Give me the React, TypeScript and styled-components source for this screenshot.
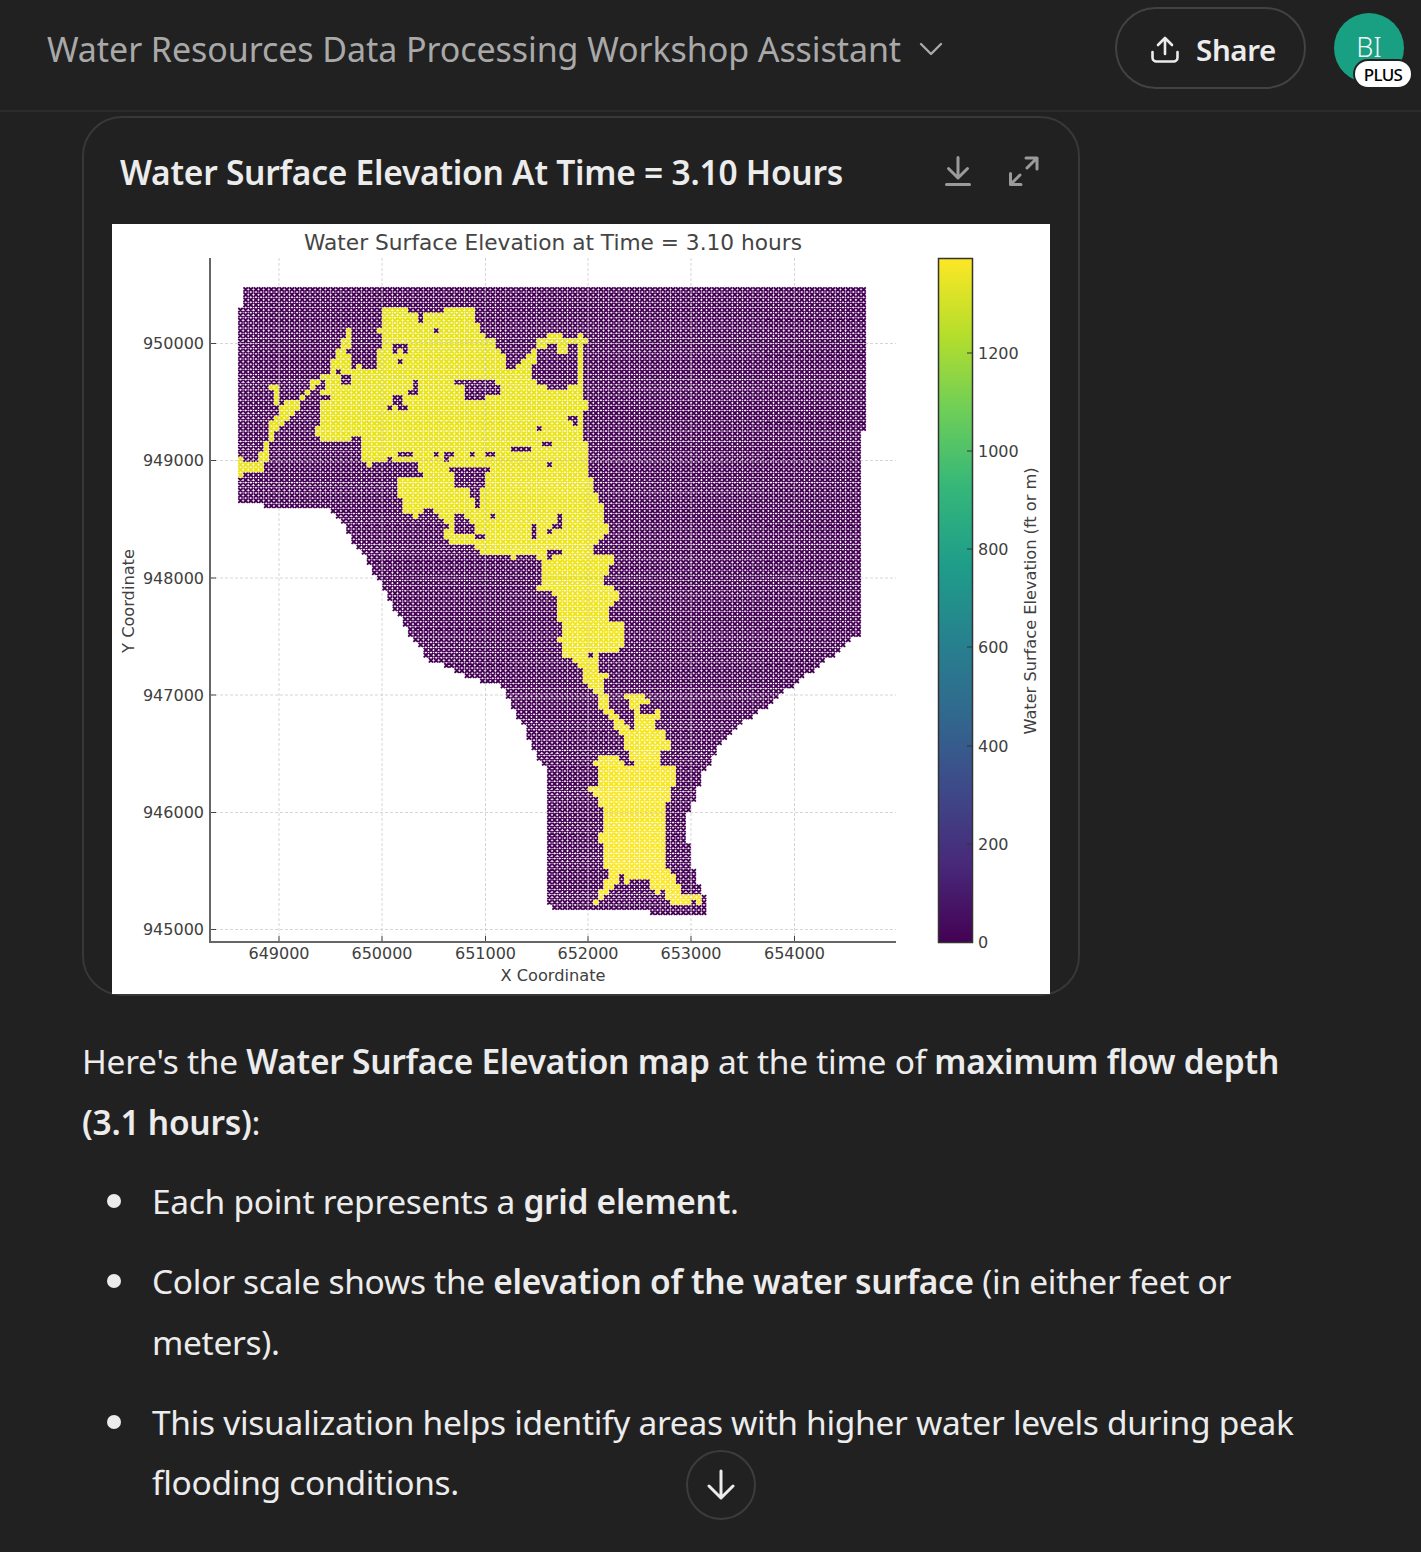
import React from "react";
import styled, { createGlobalStyle } from "styled-components";

const GlobalStyle = createGlobalStyle`
  html, body {
    margin: 0;
    background: #212121;
    height: 100%;
    overflow: hidden;
  }
  #root {
    height: 100%;
  }
`;

const Page = styled.div`
  position: relative;
  height: 1552px;
  overflow: hidden;
  background: #212121;
  color: #ececec;
  font-family: "Noto Sans", "Open Sans", sans-serif;
`;

const Header = styled.header`
  display: flex;
  align-items: center;
  justify-content: space-between;
  box-sizing: border-box;
  height: 112px;
  padding: 0 17px 14px 47px;
  border-bottom: 2px solid #2c2c2c;
`;

const ChatTitle = styled.div`
  display: flex;
  align-items: center;
  gap: 18px;
  margin-top: 2px;
  font-size: 34px;
  letter-spacing: -0.08px;
  color: #a9a9a9;
`;

const HeaderActions = styled.div`
  display: flex;
  align-items: center;
  gap: 28px;
`;

const ShareButton = styled.button`
  display: flex;
  align-items: center;
  justify-content: center;
  gap: 17px;
  box-sizing: border-box;
  width: 191px;
  height: 82px;
  padding: 3px 0 0 6px;
  border: 2px solid #424242;
  border-radius: 41px;
  background: transparent;
  color: #ececec;
  font-family: inherit;
  font-size: 29.5px;
  font-weight: 600;
  letter-spacing: -0.4px;
`;

const Avatar = styled.div`
  position: relative;
  display: flex;
  align-items: center;
  justify-content: center;
  box-sizing: border-box;
  width: 70px;
  height: 70px;
  padding-bottom: 4px;
  border-radius: 50%;
  background: #19a083;
  color: #f4f4f4;
  font-size: 27px;
  font-weight: 300;
`;

const PlanBadge = styled.span`
  position: absolute;
  left: 21px;
  top: 48px;
  display: flex;
  align-items: center;
  justify-content: center;
  width: 56px;
  height: 26px;
  border-radius: 13px;
  background: #fff;
  color: #000;
  font-size: 17px;
  font-weight: 500;
  letter-spacing: -0.7px;
  box-shadow: 0 0 0 2px #212121;
`;

const Main = styled.main`
  box-sizing: border-box;
  padding: 4px 84px 0 82px;
`;

const ChartCard = styled.section`
  box-sizing: border-box;
  width: 998px;
  height: 880px;
  padding: 0 28px;
  border: 2px solid #383838;
  border-radius: 40px;
`;

const ChartHeader = styled.div`
  display: flex;
  align-items: center;
  justify-content: space-between;
  box-sizing: border-box;
  height: 106px;
  padding: 2px 11px 0 8px;
`;

const ChartTitle = styled.h2`
  margin: 0;
  font-size: 33.5px;
  font-weight: 600;
  letter-spacing: -0.23px;
  color: #ececec;
`;

const ChartTools = styled.div`
  display: flex;
  align-items: center;
  gap: 38px;
  margin-top: -2px;
  color: #9b9b9b;
`;

const ChartSvg = styled.svg`
  display: block;
  width: 938px;
  height: 770px;
  background: #fff;
`;

const TickLabel = styled.text`
  font-family: "DejaVu Sans", sans-serif;
  font-size: 16px;
  fill: #404040;
`;

const AxisTitle = styled.text`
  font-family: "DejaVu Sans", sans-serif;
  font-size: 16.2px;
  fill: #404040;
`;

const PlotTitle = styled.text`
  font-family: "DejaVu Sans", sans-serif;
  font-size: 21.7px;
  fill: #444;
`;

const Paragraph = styled.p`
  margin: 35px 0 0;
  font-size: 33.5px;
  line-height: 60.5px;
  letter-spacing: -0.26px;
`;

const Strong = styled.strong`
  font-weight: 600;
`;

const BulletList = styled.ul`
  list-style: none;
  margin: 19px 0 0;
  padding: 0 0 0 25px;
`;

const BulletItem = styled.li`
  display: flex;
  gap: 31px;
  margin-bottom: 19.5px;
  font-size: 33.5px;
  line-height: 60.5px;
  letter-spacing: -0.3px;
`;

const BulletDot = styled.span`
  flex: none;
  width: 14px;
  height: 14px;
  margin-top: 23px;
  border-radius: 50%;
  background: #ececec;
`;

const ScrollDown = styled.button`
  position: absolute;
  left: 686px;
  top: 1450px;
  display: flex;
  align-items: center;
  justify-content: center;
  box-sizing: border-box;
  width: 70px;
  height: 70px;
  padding: 0;
  border: 2px solid #3c3c3c;
  border-radius: 50%;
  background: #212121;
  color: #ececec;
`;

type Pt = [number, number];

// the crops were taken at 3x, so traced outlines are kept in crop coordinates
const crop = (ox: number, oy: number, pts: number[][]): Pt[] =>
  pts.map(([x, y]) => [ox + x / 3, oy + y / 3]);

const boxes = (ox: number, oy: number, list: number[][]) =>
  list.map(([a, b, c, d]) => [ox + a / 3, oy + b / 3, ox + c / 3, oy + d / 3]);

const domain: Pt[] = [
  [243, 287], [867, 287], [867, 433], [862, 433], [862, 632], [853, 640], [840, 650], [800, 680],
  [753, 717], [733, 730], [720, 743], [713, 760], [703, 773], [697, 793], [692, 807], [687, 817],
  [687, 837], [692, 860], [697, 880], [702, 893], [708, 902], [708, 914], [651, 914], [651, 908],
  [553, 908], [548, 902], [548, 770], [543, 765], [533, 748], [527, 733], [523, 723], [512, 708],
  [502, 687], [472, 678], [455, 672], [430, 660], [413, 640], [403, 623], [390, 600], [382, 585],
  [370, 567], [363, 553], [353, 543], [343, 525], [337, 518], [327, 510], [265, 509], [265, 503],
  [238, 503], [238, 305], [243, 305],
];

const flooded: Pt[] = [
  ...crop(210, 270, [
    [520, 105], [597, 105], [597, 135], [700, 135], [703, 105], [767, 105], [767, 120], [797, 120],
    [797, 150], [812, 165], [812, 190], [828, 205], [860, 210], [860, 225], [875, 240], [890, 265],
    [890, 295], [920, 295], [935, 280], [950, 265], [985, 225], [985, 210], [1015, 205], [1015, 190],
    [1060, 190], [1060, 210], [1110, 210], [1110, 190], [1122, 190], [1122, 210], [1137, 210],
    [1137, 225], [1122, 225], [1122, 385], [1137, 385], [1137, 420], [1122, 430], [1122, 520],
    [1137, 525], [1137, 630],
  ]),
  ...crop(380, 480, [
    [640, 0], [640, 30], [660, 50], [660, 70], [672, 80], [672, 125], [705, 125], [705, 135],
    [690, 140], [690, 155], [670, 165], [660, 180], [640, 195], [640, 225], [705, 230], [705, 245],
    [690, 250], [690, 285], [660, 285], [670, 300], [670, 315], [705, 320], [705, 335], [720, 335],
    [720, 365], [690, 375], [690, 420], [735, 425], [735, 490], [720, 505], [720, 520], [660, 525],
    [660, 580], [690, 580], [690, 595], [675, 600],
  ]),
  ...crop(520, 680, [
    [250, 0], [250, 35], [270, 35], [270, 85], [300, 105], [315, 125], [330, 145], [345, 155],
    [345, 100], [330, 85], [330, 50], [315, 50], [315, 35], [378, 35], [378, 50], [392, 50],
    [392, 65], [362, 70], [362, 105], [407, 105], [407, 85], [422, 85], [422, 105], [407, 120],
    [407, 155], [438, 155], [438, 175], [453, 180], [453, 205], [425, 210], [425, 260], [468, 260],
    [468, 310], [455, 320], [455, 370], [438, 375], [438, 560], [455, 575], [470, 590], [470, 610],
    [485, 615], [485, 645], [545, 650], [545, 682], [530, 682], [530, 665], [515, 665], [515, 682],
    [455, 682], [455, 660], [440, 650], [438, 630], [420, 630], [420, 645], [407, 645], [395, 625],
    [378, 595], [362, 595], [345, 590], [330, 610], [315, 610], [315, 580], [300, 580], [300, 595],
    [285, 610], [270, 630], [252, 645], [252, 665], [238, 668], [238, 682], [222, 682], [222, 665],
    [238, 660], [238, 630], [255, 615], [255, 595], [270, 580], [255, 570], [252, 490], [238, 490],
    [238, 455], [252, 455], [252, 380], [238, 380], [238, 350], [222, 345], [222, 330], [208, 330],
    [208, 315], [238, 315], [238, 262], [222, 262], [222, 245], [238, 245], [238, 227], [300, 227],
    [300, 240], [330, 240], [315, 205], [315, 170], [285, 150], [285, 125], [270, 120], [255, 100],
    [240, 85], [240, 50], [220, 35], [205, 15], [190, 0],
  ]),
  ...crop(380, 480, [
    [610, 570], [595, 565], [580, 530], [550, 525], [550, 490], [535, 490], [535, 475], [550, 470],
    [550, 435], [535, 425], [535, 365], [520, 340], [472, 330], [472, 315], [487, 315], [487, 250],
    [475, 245], [470, 230], [410, 230], [410, 245], [395, 245], [395, 230], [320, 225], [287, 205],
    [287, 195], [195, 185], [195, 150], [210, 135], [195, 120], [165, 105], [160, 90], [135, 90],
    [130, 105], [115, 105], [115, 120], [100, 120], [100, 105], [70, 90], [70, 60], [55, 45], [55, 0],
  ]),
  ...crop(210, 270, [
    [580, 615], [595, 615], [595, 630], [640, 630], [640, 600], [625, 600], [625, 575], [555, 575],
    [535, 565], [505, 575], [495, 575], [480, 595], [460, 570], [457, 510], [445, 490], [440, 505],
    [410, 510], [410, 520], [395, 520], [380, 510], [318, 505], [318, 470], [333, 470], [333, 385],
    [360, 383], [395, 380], [395, 368], [335, 368], [345, 350], [330, 345], [300, 368], [285, 385],
    [258, 420], [225, 460], [195, 490], [180, 520], [180, 575], [165, 575], [165, 610], [100, 612],
    [85, 625], [85, 560], [100, 560], [100, 575], [150, 575], [150, 545], [165, 540], [165, 510],
    [180, 505], [180, 460], [210, 430], [210, 400], [195, 400], [195, 365], [180, 365], [180, 350],
    [210, 350], [210, 400], [225, 400], [240, 385], [270, 385], [285, 365], [305, 335], [330, 320],
    [365, 300], [365, 265], [380, 250], [395, 210], [412, 205], [412, 175], [425, 175], [425, 205],
    [412, 240], [430, 280], [430, 295], [445, 295], [445, 280], [455, 280], [455, 295], [503, 295],
    [503, 250], [520, 230], [520, 190], [505, 190], [505, 175], [520, 175],
  ]),
];

const archHole = crop(210, 270, [
  [985, 240], [1015, 240], [1015, 225], [1045, 225], [1045, 240], [1060, 255], [1075, 255],
  [1075, 225], [1107, 225], [1107, 350], [1075, 350], [1075, 365], [1060, 350], [1045, 365],
  [1000, 350], [985, 335], [970, 320], [965, 290], [985, 250],
]);

const dryPatches = [
  ...boxes(210, 270, [
    [622, 135, 640, 155], [672, 174, 690, 190], [550, 228, 565, 258], [565, 228, 596, 240],
    [582, 240, 596, 258], [564, 260, 580, 276], [380, 297, 396, 312], [395, 316, 426, 346],
    [332, 333, 348, 348], [612, 333, 626, 366], [598, 366, 626, 382], [550, 368, 582, 400],
    [565, 400, 596, 416], [534, 402, 550, 418], [737, 333, 858, 348], [767, 348, 874, 382],
    [767, 382, 828, 398], [1076, 438, 1107, 454], [1090, 456, 1106, 470], [983, 474, 998, 488],
    [998, 508, 1030, 524], [905, 526, 966, 540], [565, 544, 612, 558], [672, 544, 688, 558],
    [704, 544, 736, 558], [704, 562, 720, 576], [781, 544, 796, 558], [828, 544, 858, 558],
    [1013, 578, 1028, 594], [722, 596, 843, 612], [737, 612, 827, 646], [782, 646, 812, 680],
    [797, 680, 812, 716], [843, 738, 858, 752], [738, 738, 765, 755], [738, 755, 780, 770],
    [738, 770, 795, 785], [797, 790, 827, 805], [968, 755, 983, 805], [1013, 771, 1028, 786],
    [1030, 755, 1058, 770], [1044, 738, 1058, 755], [1013, 844, 1058, 858], [1013, 858, 1028, 875],
  ]),
  ...boxes(380, 480, [
    [332, 105, 348, 122], [225, 105, 255, 120], [225, 120, 270, 135], [225, 135, 285, 157],
    [287, 157, 317, 175], [457, 125, 472, 175], [503, 140, 518, 156], [535, 105, 550, 135],
    [520, 125, 550, 135], [505, 212, 550, 227], [505, 227, 520, 245], [626, 510, 641, 526],
  ]),
  ...boxes(520, 680, [[345, 158, 360, 172], [315, 245, 345, 260]]),
];

const inside = (poly: Pt[], x: number, y: number) => {
  let hit = false;
  for (let i = 0, j = poly.length - 1; i < poly.length; j = i++) {
    const [xi, yi] = poly[i];
    const [xj, yj] = poly[j];
    if (yi > y !== yj > y && x < ((xj - xi) * (y - yi)) / (yj - yi) + xi) hit = !hit;
  }
  return hit;
};

const STEP = 5.15;
const ARM = 2.2;
const HALO = 2.1;

// one x marker per grid point, with a faint square under it like the blurred scatter
const buildMarkers = () => {
  const out = { purple: "", yellow: "", purpleHalo: "", yellowHalo: "" };
  for (let y = 289.5; y < 915; y += STEP) {
    for (let x = 240.5; x < 870; x += STEP) {
      const wet =
        inside(flooded, x, y) &&
        !inside(archHole, x, y) &&
        !dryPatches.some(([a, b, c, d]) => x >= a && x <= c && y >= b && y <= d);
      if (!wet && !inside(domain, x, y)) continue;
      const l = (x - ARM).toFixed(1);
      const r = (x + ARM).toFixed(1);
      const t = (y - ARM).toFixed(1);
      const b = (y + ARM).toFixed(1);
      const mark = `M${l} ${t}L${r} ${b}M${l} ${b}L${r} ${t}`;
      const halo = `M${(x - HALO).toFixed(1)} ${(y - HALO).toFixed(1)}h4.2v4.2h-4.2z`;
      if (wet) {
        out.yellow += mark;
        out.yellowHalo += halo;
      } else {
        out.purple += mark;
        out.purpleHalo += halo;
      }
    }
  }
  return out;
};

const markers = buildMarkers();

const yTicks: [string, number][] = [
  ["950000", 343.5], ["949000", 460.5], ["948000", 578], ["947000", 695], ["946000", 812.5], ["945000", 929.5],
];
const xTicks: [string, number][] = [
  ["649000", 279], ["650000", 382], ["651000", 485.5], ["652000", 588], ["653000", 691], ["654000", 794.5],
];
const barTicks: [string, number][] = [
  ["1200", 353], ["1000", 451], ["800", 549], ["600", 647], ["400", 746], ["200", 844], ["0", 942],
];
const viridis = ["#fde725", "#b5de2b", "#6ece58", "#35b779", "#1f9e89", "#26828e", "#31688e", "#3e4989", "#482878", "#440154"];

const ElevationChart = () => (
  <ChartSvg viewBox="112 224 938 770">
    <defs>
      <linearGradient id="viridis" x1="0" y1="0" x2="0" y2="1">
        {viridis.map((c, i) => (
          <stop key={c} offset={i / (viridis.length - 1)} stopColor={c} />
        ))}
      </linearGradient>
      <linearGradient id="wet" gradientUnits="userSpaceOnUse" x1="0" y1="300" x2="0" y2="913">
        <stop offset="0" stopColor="#e6e212" />
        <stop offset="0.5" stopColor="#efe416" />
        <stop offset="1" stopColor="#fde725" />
      </linearGradient>
    </defs>
    <PlotTitle x="553" y="250" textAnchor="middle">Water Surface Elevation at Time = 3.10 hours</PlotTitle>
    <path d={markers.purpleHalo} fill="#440154" fillOpacity="0.35" />
    <path d={markers.purple} stroke="#440154" strokeWidth="1.7" fill="none" />
    <path d={markers.yellowHalo} fill="url(#wet)" fillOpacity="0.45" />
    <path d={markers.yellow} stroke="url(#wet)" strokeWidth="1.7" fill="none" />
    {yTicks.map(([label, y]) => (
      <g key={label}>
        <line x1="210" x2="896" y1={y} y2={y} stroke="#bbb" strokeOpacity="0.6" strokeDasharray="3 2" />
        <line x1="210" x2="216" y1={y} y2={y} stroke="#444" />
        <TickLabel x="204" y={y + 5.5} textAnchor="end">{label}</TickLabel>
      </g>
    ))}
    {xTicks.map(([label, x]) => (
      <g key={label}>
        <line x1={x} x2={x} y1="258" y2="942" stroke="#bbb" strokeOpacity="0.6" strokeDasharray="3 2" />
        <line x1={x} x2={x} y1="936" y2="942" stroke="#444" />
        <TickLabel x={x} y="959" textAnchor="middle">{label}</TickLabel>
      </g>
    ))}
    <path d="M210 258V942H896" stroke="#666" strokeWidth="2" fill="none" />
    <AxisTitle x="553" y="981" textAnchor="middle">X Coordinate</AxisTitle>
    <AxisTitle transform="translate(134 601) rotate(-90)" textAnchor="middle">Y Coordinate</AxisTitle>
    <rect x="938.5" y="258.5" width="34" height="684" fill="url(#viridis)" stroke="#333" strokeWidth="1.5" />
    {barTicks.map(([label, y]) => (
      <g key={label}>
        <line x1="967" x2="973" y1={y} y2={y} stroke="#333" />
        <TickLabel x="978" y={y + 6}>{label}</TickLabel>
      </g>
    ))}
    <AxisTitle transform="translate(1036 601) rotate(-90)" textAnchor="middle">Water Surface Elevation (ft or m)</AxisTitle>
  </ChartSvg>
);

const ChevronIcon = () => (
  <svg width="24" height="14" viewBox="0 0 24 14" fill="none" stroke="currentColor" strokeWidth="2.4" strokeLinecap="round" strokeLinejoin="round">
    <path d="M2 2l10 10L22 2" />
  </svg>
);

const ShareIcon = () => (
  <svg width="28" height="27" viewBox="0 0 28 27" fill="none" stroke="currentColor" strokeWidth="2.6" strokeLinecap="round" strokeLinejoin="round">
    <path d="M14 18V2M7 9l7-7 7 7" />
    <path d="M1.500 16v5.500a4 4 0 0 0 4 4h17a4 4 0 0 0 4-4V16" />
  </svg>
);

const DownloadIcon = () => (
  <svg width="26" height="30" viewBox="0 0 26 30" fill="none" stroke="currentColor" strokeWidth="3" strokeLinecap="round" strokeLinejoin="round">
    <path d="M13 1.500V22M3.500 12.500L13 22l9.500-9.500M1.500 28.500h23" />
  </svg>
);

const ExpandIcon = () => (
  <svg width="30" height="30" viewBox="0 0 30 30" fill="none" stroke="currentColor" strokeWidth="3" strokeLinecap="round" strokeLinejoin="round">
    <path d="M17 2h11v11M28 2L18 12M1.500 17.500V28.500H12M1.500 28.500L11 19" />
  </svg>
);

const ArrowDownIcon = () => (
  <svg width="28" height="32" viewBox="0 0 28 32" fill="none" stroke="currentColor" strokeWidth="3" strokeLinecap="round" strokeLinejoin="round">
    <path d="M14 2v27M2 17l12 12 12-12" />
  </svg>
);

const App = () => (
  <Page>
    <GlobalStyle />
    <Header>
      <ChatTitle>
        Water Resources Data Processing Workshop Assistant
        <ChevronIcon />
      </ChatTitle>
      <HeaderActions>
        <ShareButton>
          <ShareIcon />
          Share
        </ShareButton>
        <Avatar>
          BI
          <PlanBadge>PLUS</PlanBadge>
        </Avatar>
      </HeaderActions>
    </Header>
    <Main>
      <ChartCard>
        <ChartHeader>
          <ChartTitle>Water Surface Elevation At Time = 3.10 Hours</ChartTitle>
          <ChartTools>
            <DownloadIcon />
            <ExpandIcon />
          </ChartTools>
        </ChartHeader>
        <ElevationChart />
      </ChartCard>
      <Paragraph>
        Here's the <Strong>Water Surface Elevation map</Strong> at the time of <Strong>maximum flow depth (3.1 hours)</Strong>:
      </Paragraph>
      <BulletList>
        <BulletItem>
          <BulletDot />
          <span>Each point represents a <Strong>grid element</Strong>.</span>
        </BulletItem>
        <BulletItem>
          <BulletDot />
          <span>Color scale shows the <Strong>elevation of the water surface</Strong> (in either feet or meters).</span>
        </BulletItem>
        <BulletItem>
          <BulletDot />
          <span>This visualization helps identify areas with higher water levels during peak flooding conditions.</span>
        </BulletItem>
      </BulletList>
    </Main>
    <ScrollDown>
      <ArrowDownIcon />
    </ScrollDown>
  </Page>
);

export default App;
